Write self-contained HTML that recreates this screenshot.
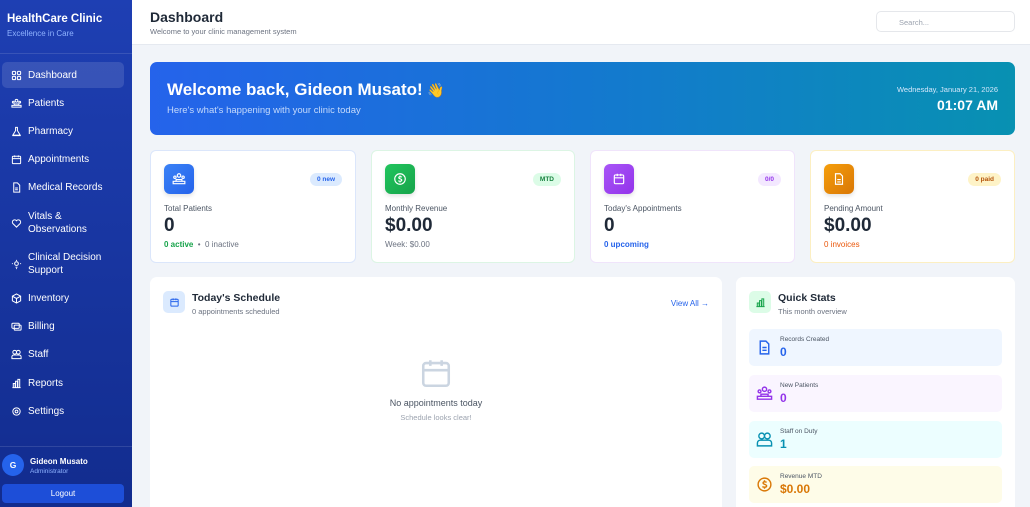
<!DOCTYPE html>
<html style="overflow:hidden;height:507px"><head><meta charset="utf-8"><style>
*{box-sizing:border-box;margin:0;padding:0}
body{width:1030px;height:507px;overflow:hidden;font-family:"Liberation Sans",sans-serif;background:#f1f4f9;position:relative;color:#1f2937}
.sb{position:absolute;left:0;top:0;width:132px;height:507px;background:linear-gradient(180deg,#1e3fb3,#122c8e)}
.brand{position:absolute;left:7px;top:13px;color:#fff;font-weight:bold;font-size:11.5px}
.brand small{display:block;font-weight:normal;font-size:8px;color:#8fb3ff;margin-top:4px}
.sep{position:absolute;left:0;width:132px;height:1px;background:rgba(255,255,255,.12)}
.nav{position:absolute;left:11px;color:#fff;font-size:10px;display:flex;align-items:center}
.nav svg{width:11px;height:11px;margin-right:6px;flex:none}
.act{position:absolute;left:2px;top:62px;width:122px;height:26px;border-radius:5px;background:rgba(255,255,255,.12)}
.hdr{position:absolute;left:132px;top:0;right:0;height:45px;background:#fff;border-bottom:1px solid #e5e9f0}
.hdr h1{position:absolute;left:18px;top:9px;font-size:14px;color:#1f2937}
.hdr p{position:absolute;left:18px;top:27px;font-size:7.5px;color:#6b7280}
.search{position:absolute;left:744px;top:11px;width:139px;height:21px;border:1px solid #e5e7eb;border-radius:5px;font-size:7.5px;color:#9ca3af;padding:6px 0 0 22px}
.ban{position:absolute;left:150px;top:62px;width:865px;height:73px;border-radius:7px;background:linear-gradient(90deg,#2563eb,#1478d0 50%,#0891b2)}
.ban h2{position:absolute;left:17px;top:18px;color:#fff;font-size:17px}
.ban p{position:absolute;left:17px;top:43px;color:#c5dafc;font-size:9.5px}
.ban .d{position:absolute;right:17px;top:23px;color:#d4e7fb;font-size:7.5px;text-align:right}
.ban .t{position:absolute;right:17px;top:35px;color:#fff;font-size:14px;font-weight:bold}
.card{position:absolute;top:150px;height:113px;background:#fff;border-radius:6px;border:1px solid}
.ic{position:absolute;left:13px;top:13px;width:30px;height:30px;border-radius:6px;display:flex;align-items:center;justify-content:center;box-shadow:0 2px 4px rgba(0,0,0,.12)}
.ic svg{width:14px;height:14px}
.pill{position:absolute;right:13px;top:22px;height:13px;padding:0 7px;border-radius:7px;font-size:6.5px;font-weight:bold;line-height:13px}
.lbl{position:absolute;left:13px;top:53px;font-size:8px;color:#4b5563}
.val{position:absolute;left:13px;top:64px;font-size:19px;font-weight:bold;color:#1f2937}
.sub{position:absolute;left:13px;top:89px;font-size:8px;color:#6b7280}
.pan{position:absolute;top:277px;height:230px;background:#fff;border-radius:7px 7px 0 0}
.pi{position:absolute;left:13px;top:14px;width:22px;height:22px;border-radius:5px;display:flex;align-items:center;justify-content:center}
.pi svg{width:11px;height:11px}
.pt{position:absolute;left:42px;top:15px;font-size:10.5px;font-weight:bold;color:#1f2937}
.ps{position:absolute;left:42px;top:30px;font-size:7.5px;color:#6b7280}
.qs{position:absolute;left:13px;width:253px;height:37px;border-radius:5px}
.qs svg{position:absolute;left:7px;top:10px;width:17px;height:17px}
.qs .a{position:absolute;left:31px;top:7px;font-size:6.5px;color:#4b5563}
.qs .b{position:absolute;left:31px;top:16px;font-size:12px;font-weight:bold}
</style></head><body>
<div class="sb">
<div class="brand">HealthCare Clinic<small>Excellence in Care</small></div>
<div class="sep" style="top:53px"></div>
<div class="act"></div>
<div class="nav" style="top:70px"><svg viewBox="0 0 24 24" fill="none" stroke="#fff" stroke-width="2.2"><rect x="3" y="3" width="7" height="7" rx="2"/><rect x="14" y="3" width="7" height="7" rx="2"/><rect x="3" y="14" width="7" height="7" rx="2"/><rect x="14" y="14" width="7" height="7" rx="2"/></svg>Dashboard</div>
<div class="nav" style="top:98px"><svg viewBox="0 0 24 24" fill="none" stroke="#fff" stroke-width="2.2"><circle cx="12" cy="6" r="3"/><circle cx="5" cy="9" r="2"/><circle cx="19" cy="9" r="2"/><path d="M2 20v-4h20v4zM7 16v-3h10v3"/></svg>Patients</div>
<div class="nav" style="top:126px"><svg viewBox="0 0 24 24" fill="none" stroke="#fff" stroke-width="2.2"><path d="M9 3h6M10 3v7l-6 10h16l-6-10V3M3 21h18"/></svg>Pharmacy</div>
<div class="nav" style="top:154px"><svg viewBox="0 0 24 24" fill="none" stroke="#fff" stroke-width="2.2"><rect x="3" y="5" width="18" height="16" rx="2"/><path d="M3 10h18M8 3v4M16 3v4"/></svg>Appointments</div>
<div class="nav" style="top:182px"><svg viewBox="0 0 24 24" fill="none" stroke="#fff" stroke-width="2.2"><path d="M6 2h8l5 5v15H6z"/><path d="M9 13h6M9 17h6"/></svg>Medical Records</div>
<div class="nav" style="top:210px;line-height:13px"><svg viewBox="0 0 24 24" fill="none" stroke="#fff" stroke-width="2.2"><path d="M12 20l-8-8a5 5 0 018-6 5 5 0 018 6z"/></svg>Vitals &amp;<br>Observations</div>
<div class="nav" style="top:251px;line-height:13px"><svg viewBox="0 0 24 24" fill="none" stroke="#fff" stroke-width="2.2"><circle cx="12" cy="10" r="4"/><path d="M12 2v2M4 10H2M22 10h-2M10 18h4M11 21h2"/></svg>Clinical Decision<br>Support</div>
<div class="nav" style="top:293px"><svg viewBox="0 0 24 24" fill="none" stroke="#fff" stroke-width="2.2"><path d="M12 2l9 5v10l-9 5-9-5V7zM3 7l9 5 9-5M12 12v10"/></svg>Inventory</div>
<div class="nav" style="top:321px"><svg viewBox="0 0 24 24" fill="none" stroke="#fff" stroke-width="2.2"><rect x="2" y="5" width="16" height="11" rx="2"/><rect x="7" y="9" width="15" height="11" rx="2"/></svg>Billing</div>
<div class="nav" style="top:349px"><svg viewBox="0 0 24 24" fill="none" stroke="#fff" stroke-width="2.2"><circle cx="8" cy="7" r="4"/><circle cx="16" cy="7" r="4"/><path d="M2 21v-4a4 4 0 014-4h12a4 4 0 014 4v4z"/></svg>Staff</div>
<div class="nav" style="top:378px"><svg viewBox="0 0 24 24" fill="none" stroke="#fff" stroke-width="2.2"><path d="M3 21h18M5 21V12h4v9M10 21V7h4v14M15 21V3h4v18"/></svg>Reports</div>
<div class="nav" style="top:406px"><svg viewBox="0 0 24 24" fill="none" stroke="#fff" stroke-width="2.2"><circle cx="12" cy="12" r="3"/><circle cx="12" cy="12" r="8"/></svg>Settings</div>
<div class="sep" style="top:446px"></div>
<div style="position:absolute;left:2px;top:454px;width:22px;height:22px;border-radius:50%;background:#2563eb;color:#fff;font-size:8.5px;font-weight:bold;text-align:center;line-height:22px">G</div>
<div style="position:absolute;left:30px;top:457px;color:#fff;font-size:8px;font-weight:bold">Gideon Musato</div>
<div style="position:absolute;left:30px;top:468px;color:#8fb3ff;font-size:6.5px">Administrator</div>
<div style="position:absolute;left:2px;top:484px;width:122px;height:19px;border-radius:4px;background:#1d4ed8;color:#fff;font-size:8px;text-align:center;line-height:19px">Logout</div>
</div>

<div class="hdr"><h1>Dashboard</h1><p>Welcome to your clinic management system</p><div class="search">Search...</div></div>

<div class="ban"><h2>Welcome back, Gideon Musato! <span style="font-family:'Noto Color Emoji','DejaVu Sans',sans-serif;font-size:14px">👋</span></h2><p>Here's what's happening with your clinic today</p><div class="d">Wednesday, January 21, 2026</div><div class="t">01:07 AM</div></div>

<div class="card" style="left:150px;width:206px;border-color:#dbe6fb">
<div class="ic" style="background:linear-gradient(135deg,#3b82f6,#2563eb)"><svg viewBox="0 0 24 24" fill="none" stroke="#fff" stroke-width="2"><circle cx="12" cy="6" r="3"/><circle cx="5" cy="9" r="2"/><circle cx="19" cy="9" r="2"/><path d="M2 20v-4h20v4zM7 16v-3h10v3"/></svg></div>
<div class="pill" style="background:#dbeafe;color:#2563eb">0 new</div>
<div class="lbl">Total Patients</div><div class="val">0</div>
<div class="sub"><span style="color:#16a34a;font-weight:bold">0 active</span> &nbsp;•&nbsp; 0 inactive</div></div>

<div class="card" style="left:371px;width:204px;border-color:#dcf5e4">
<div class="ic" style="background:linear-gradient(135deg,#22c55e,#16a34a)"><svg viewBox="0 0 24 24" fill="none" stroke="#fff" stroke-width="2"><circle cx="12" cy="12" r="9"/><path d="M15 9c-1-1-5-1.5-5 .8S15 11.5 15 14s-4 2-6 1M12 6v2M12 16v2"/></svg></div>
<div class="pill" style="background:#dcfce7;color:#15803d">MTD</div>
<div class="lbl">Monthly Revenue</div><div class="val">$0.00</div><div class="sub">Week: $0.00</div></div>

<div class="card" style="left:590px;width:205px;border-color:#f0e4fb">
<div class="ic" style="background:linear-gradient(135deg,#a855f7,#9333ea)"><svg viewBox="0 0 24 24" fill="none" stroke="#fff" stroke-width="2"><rect x="4" y="5" width="16" height="15" rx="2"/><path d="M4 10h16M9 3v4M15 3v4"/></svg></div>
<div class="pill" style="background:#f3e8ff;color:#9333ea">0/0</div>
<div class="lbl">Today's Appointments</div><div class="val">0</div><div class="sub" style="color:#2563eb;font-weight:bold">0 upcoming</div></div>

<div class="card" style="left:810px;width:205px;border-color:#fcefc2">
<div class="ic" style="background:linear-gradient(135deg,#f59e0b,#d97706)"><svg viewBox="0 0 24 24" fill="none" stroke="#fff" stroke-width="2"><path d="M6 3h8l4 4v14H6z"/><path d="M9 13h6M9 17h6"/></svg></div>
<div class="pill" style="background:#fef3c7;color:#b45309">0 paid</div>
<div class="lbl">Pending Amount</div><div class="val">$0.00</div><div class="sub" style="color:#ea580c">0 invoices</div></div>

<div class="pan" style="left:150px;width:572px">
<div class="pi" style="background:#dbeafe"><svg viewBox="0 0 24 24" fill="none" stroke="#2563eb" stroke-width="2.2"><rect x="4" y="5" width="16" height="15" rx="2"/><path d="M4 10h16M9 3v4M15 3v4"/></svg></div>
<div class="pt">Today's Schedule</div><div class="ps">0 appointments scheduled</div>
<div style="position:absolute;right:13px;top:22px;font-size:8px;color:#2563eb">View All →</div>
<svg style="position:absolute;left:269px;top:79px" width="34" height="34" viewBox="0 0 24 24" fill="none" stroke="#cbd5e1" stroke-width="1.8"><rect x="3" y="5" width="18" height="16" rx="2"/><path d="M3 10h18M8 3v4M16 3v4"/></svg>
<div style="position:absolute;left:0;width:572px;top:121px;text-align:center;font-size:9px;color:#4b5563">No appointments today</div>
<div style="position:absolute;left:0;width:572px;top:136px;text-align:center;font-size:7.5px;color:#9ca3af">Schedule looks clear!</div>
</div>

<div class="pan" style="left:736px;width:279px">
<div class="pi" style="background:#dcfce7"><svg viewBox="0 0 24 24" fill="none" stroke="#16a34a" stroke-width="2.2"><path d="M3 21h18M5 21V13h4v8M10 21V8h4v13M15 21V4h4v17"/></svg></div>
<div class="pt">Quick Stats</div><div class="ps">This month overview</div>
<div class="qs" style="top:52px;background:#eff6ff"><svg viewBox="0 0 24 24" fill="none" stroke="#2563eb" stroke-width="2"><path d="M6 3h8l4 4v14H6z"/><path d="M9 12h6M9 16h6"/></svg><div class="a">Records Created</div><div class="b" style="color:#2563eb">0</div></div>
<div class="qs" style="top:98px;background:#faf5ff"><svg viewBox="0 0 24 24" fill="none" stroke="#9333ea" stroke-width="2"><circle cx="12" cy="6" r="3"/><circle cx="5" cy="9" r="2"/><circle cx="19" cy="9" r="2"/><path d="M2 20v-4h20v4zM7 16v-3h10v3"/></svg><div class="a">New Patients</div><div class="b" style="color:#9333ea">0</div></div>
<div class="qs" style="top:144px;background:#ecfeff"><svg viewBox="0 0 24 24" fill="none" stroke="#0891b2" stroke-width="2"><circle cx="8" cy="7" r="4"/><circle cx="16" cy="7" r="4"/><path d="M2 21v-4a4 4 0 014-4h12a4 4 0 014 4v4z"/></svg><div class="a">Staff on Duty</div><div class="b" style="color:#0891b2">1</div></div>
<div class="qs" style="top:189px;background:#fefce8"><svg viewBox="0 0 24 24" fill="none" stroke="#d97706" stroke-width="2"><circle cx="12" cy="12" r="9"/><path d="M15 9c-1-1-5-1.5-5 .8S15 11.5 15 14s-4 2-6 1M12 6v2M12 16v2"/></svg><div class="a">Revenue MTD</div><div class="b" style="color:#d97706">$0.00</div></div>
</div>
</body></html>
